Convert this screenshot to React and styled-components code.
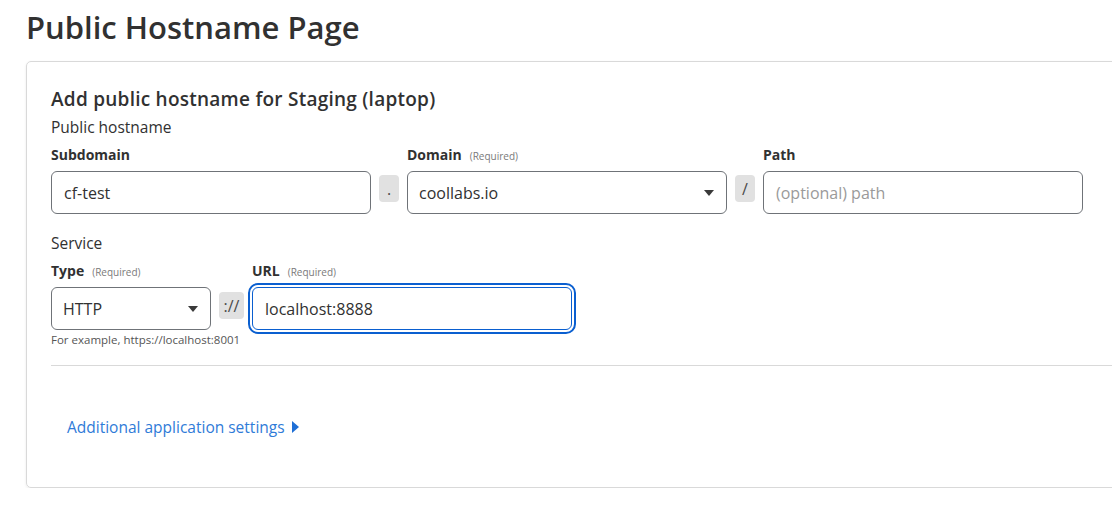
import React from 'react';
import styled, { createGlobalStyle } from 'styled-components';

const GlobalStyle = createGlobalStyle`
    body {
        margin: 0;
        background: #ffffff;
        font-family: 'Open Sans', 'Noto Sans', sans-serif;
        color: #313131;
        overflow: hidden;
    }
`

const Page = styled.main`
    padding: 7px 0 0 26px;
`

const PageTitle = styled.h1`
    margin: 0 0 14px 0;
    font-size: 31px;
    line-height: 40px;
    font-weight: 600;
    color: #313131;
`

const Card = styled.section`
    width: 1120px;
    border: 1px solid #d9d9d9;
    border-radius: 5px;
    box-shadow: 0 1px 3px rgba(0, 0, 0, 0.08);
    padding: 25px 24px 48px 24px;
`

const CardTitle = styled.h2`
    margin: 0 0 6px 0;
    font-size: 19px;
    letter-spacing: 0.25px;
    line-height: 24px;
    font-weight: 600;
`

const SectionLabel = styled.div`
    font-size: 15.5px;
    line-height: 20px;
    margin-bottom: 8px;
`

const Row = styled.div`
    display: flex;
    align-items: flex-start;
    gap: 8px;
    margin-bottom: ${p => p.$mb || 0}px;
`

const Field = styled.div`
    display: flex;
    flex-direction: column;
    width: ${p => p.$width}px;
`

const Label = styled.label`
    display: block;
    height: 20px;
    font-size: 14px;
    line-height: 20px;
    font-weight: 700;
    margin-bottom: 6px;
    white-space: nowrap;
`

const Required = styled.span`
    margin-left: 8px;
    font-size: 10px;
    line-height: 1;
    font-weight: 400;
    color: #7a7a7a;
`

const Input = styled.input`
    box-sizing: border-box;
    width: 100%;
    height: 43px;
    padding: 0 12px;
    border: 1px solid ${p => (p.$focused ? '#0a5fd0' : '#6f7378')};
    border-radius: 6px;
    font-family: inherit;
    font-size: 16px;
    color: #313131;
    background: #fff;
    outline: ${p => (p.$focused ? '2px solid #0a5fd0' : 'none')};
    outline-offset: 2px;

    &::placeholder {
        color: #9a9a9a;
    }
`

const Select = styled.div`
    box-sizing: border-box;
    height: 43px;
    padding: 0 12px 0 11px;
    border: 1px solid #6f7378;
    border-radius: 6px;
    display: flex;
    align-items: center;
    justify-content: space-between;
    font-size: 16px;
    color: #313131;
`

const Caret = styled.span`
    width: 0;
    height: 0;
    border-left: 5px solid transparent;
    border-right: 5px solid transparent;
    border-top: 6px solid #3a3a3a;
`

const Joiner = styled.div`
    box-sizing: border-box;
    width: ${p => p.$width}px;
    height: 27px;
    margin-top: ${p => p.$top}px;
    border-radius: 4px;
    background: #e1e1e1;
    color: #4a4a4a;
    font-size: 16px;
    display: flex;
    align-items: center;
    justify-content: center;
`

const Hint = styled.div`
    margin-top: 3px;
    font-size: 11.5px;
    line-height: 14px;
    color: #555;
    white-space: nowrap;
`

const Divider = styled.hr`
    margin: 18px 0 49px 0;
    border: none;
    border-top: 1px solid #d9d9d9;
`

const MoreLink = styled.a`
    display: inline-flex;
    align-items: center;
    gap: 7px;
    margin-left: 16px;
    font-size: 15.5px;
    line-height: 24px;
    color: #2f7bd8;
    text-decoration: none;
    cursor: pointer;
`

const RightCaret = styled.span`
    width: 0;
    height: 0;
    border-top: 6px solid transparent;
    border-bottom: 6px solid transparent;
    border-left: 7px solid #1f6fd6;
`

const App = () => {
    return (
        <>
            <GlobalStyle />
            <Page>
                <PageTitle>Public Hostname Page</PageTitle>
                <Card>
                    <CardTitle>Add public hostname for Staging (laptop)</CardTitle>
                    <SectionLabel>Public hostname</SectionLabel>
                    <Row $mb={19}>
                        <Field $width={320}>
                            <Label>Subdomain</Label>
                            <Input defaultValue="cf-test" />
                        </Field>
                        <Joiner $width={20} $top={30}>.</Joiner>
                        <Field $width={320}>
                            <Label>Domain<Required>(Required)</Required></Label>
                            <Select>
                                coollabs.io
                                <Caret />
                            </Select>
                        </Field>
                        <Joiner $width={20} $top={30}>/</Joiner>
                        <Field $width={320}>
                            <Label>Path</Label>
                            <Input placeholder="(optional) path" />
                        </Field>
                    </Row>
                    <SectionLabel>Service</SectionLabel>
                    <Row>
                        <Field $width={160}>
                            <Label>Type<Required>(Required)</Required></Label>
                            <Select>
                                HTTP
                                <Caret />
                            </Select>
                            <Hint>For example, https://localhost:8001</Hint>
                        </Field>
                        <Joiner $width={25} $top={31}>://</Joiner>
                        <Field $width={320}>
                            <Label>URL<Required>(Required)</Required></Label>
                            <Input $focused defaultValue="localhost:8888" />
                        </Field>
                    </Row>
                    <Divider />
                    <MoreLink>
                        Additional application settings
                        <RightCaret />
                    </MoreLink>
                </Card>
            </Page>
        </>
    );
}

export default App;
